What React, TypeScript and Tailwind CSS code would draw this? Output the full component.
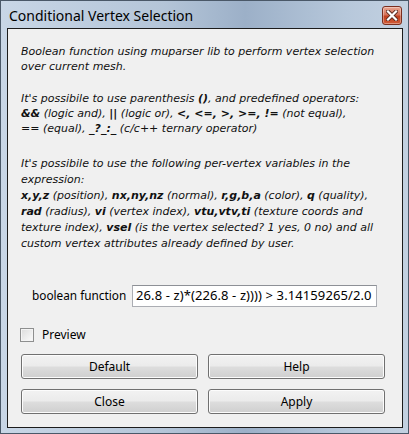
import type { ReactNode } from 'react';

const body = "font-['DejaVu_Sans',sans-serif] italic text-[11px] text-[#111]";
const ui = "font-['Noto_Sans','Open_Sans',sans-serif] text-[12px] text-black";

function B({ children }: { children: ReactNode }) {
  return <b className="font-bold">{children}</b>;
}

function CloseButton() {
  return (
    <div className="flex h-[19px] w-[20px] items-center justify-center rounded-[3px] border border-[#7a2e1f] bg-[linear-gradient(#e9a792,#d6735a_45%,#c2401f_55%,#cf5a36)] shadow-[inset_0_0_0_1px_rgba(255,255,255,0.35)]">
      <svg width="12" height="11" viewBox="0 0 12 11">
        <path d="M2 1.5 L10 9.5 M10 1.5 L2 9.5" stroke="#5a2a20" strokeWidth="4" strokeLinecap="square" />
        <path d="M2 1.5 L10 9.5 M10 1.5 L2 9.5" stroke="#ffffff" strokeWidth="2.2" strokeLinecap="square" />
      </svg>
    </div>
  );
}

function Button({ label }: { label: string }) {
  return (
    <button
      type="button"
      className={`h-[25px] w-[177px] rounded-[3px] border border-[#707070] bg-[linear-gradient(#f2f2f2,#ebebeb_48%,#dddddd_52%,#cfcfcf)] shadow-[inset_0_0_0_1px_#fcfcfc] ${ui}`}
    >
      {label}
    </button>
  );
}

export default function App() {
  return (
    <div className="h-[434px] w-[409px] overflow-hidden border border-[#4a5868] bg-[linear-gradient(90deg,#c8d6e6,#b4c5d8_40%,#9cb0c8_60%,#b7c8db_85%,#c3d1e1)]">
      <div className="flex h-[27px] items-center justify-between pl-[8px] pr-[6px] pt-[1px]">
        <span className="font-['Noto_Sans','Open_Sans',sans-serif] text-[14px] text-black">
          Conditional Vertex Selection
        </span>
        <CloseButton />
      </div>
      <div className="ml-[6px] flex h-[400px] w-[396px] flex-col border border-[#1c1c1c] bg-[#f0f0f0]">
        <div className={`pl-[13px] pt-[15px] ${body}`}>
          <p className="whitespace-nowrap leading-[15px]">
            Boolean function using muparser lib to perform vertex selection
            <br />
            over current mesh.
          </p>
          <p className="mt-[17px] whitespace-nowrap leading-[15px]">
            It's possibile to use parenthesis <B>()</B>, and predefined operators:
            <br />
            <B>&amp;&amp;</B> (logic and), <B>||</B> (logic or), <B>&lt;, &lt;=, &gt;, &gt;=, !=</B> (not equal),
            <br />
            == (equal), <B>_?_:_</B> (c/c++ ternary operator)
          </p>
          <p className="mt-[20px] whitespace-nowrap leading-[16px]">
            It's possibile to use the following per-vertex variables in the
            <br />
            expression:
            <br />
            <B>x,y,z</B> (position), <B>nx,ny,nz</B> (normal), <B>r,g,b,a</B> (color), <B>q</B> (quality),
            <br />
            <B>rad</B> (radius), <B>vi</B> (vertex index), <B>vtu,vtv,ti</B> (texture coords and
            <br />
            texture index), <B>vsel</B> (is the vertex selected? 1 yes, 0 no) and all
            <br />
            custom vertex attributes already defined by user.
          </p>
        </div>

        <div className="mt-[33px] flex items-center pl-[24px]">
          <span className="w-[100px] font-['Noto_Sans','Open_Sans',sans-serif] text-[11.8px] text-black">
            boolean function
          </span>
          <div className="flex h-[22px] w-[245px] items-center overflow-hidden border border-[#abadb3] border-t-[#8d9096] bg-white pl-[3px]">
            <span className="whitespace-nowrap font-['Noto_Sans','Open_Sans',sans-serif] text-[13px] tracking-[0.1px] text-black">
              26.8 - z)*(226.8 - z)))) &gt; 3.14159265/2.0
            </span>
          </div>
        </div>

        <div className="mt-[19px] flex items-center gap-[8px] pl-[12px]">
          <div className="h-[14px] w-[14px] border border-[#8e8f8f] bg-[linear-gradient(135deg,#dcdcdc,#fbfbfb)] shadow-[inset_0_0_0_1px_#f4f4f4]" />
          <span className={ui}>Preview</span>
        </div>

        <div className="mt-[10px] grid grid-cols-[177px_177px] gap-[10px] pl-[13px]">
          <Button label="Default" />
          <Button label="Help" />
          <Button label="Close" />
          <Button label="Apply" />
        </div>
      </div>
    </div>
  );
}
